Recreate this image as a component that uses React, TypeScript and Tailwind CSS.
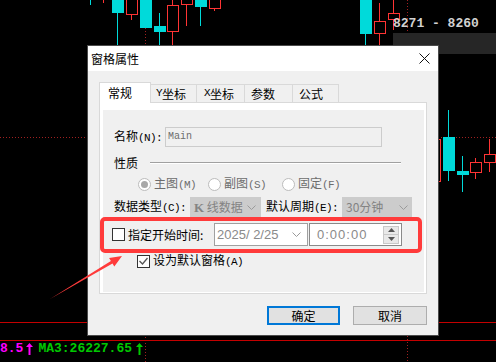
import React from "react";

type Candle = { x: number; top: number; bot: number; wt: number; wb: number; up: boolean };

const CYAN = "#00dada";
const RED = "#ff3434";

const candles: Candle[] = [
  { x: 85, top: -10, bot: -1, wt: 0, wb: 5, up: false },
  { x: 98, top: -10, bot: -1, wt: 0, wb: 3, up: true },
  { x: 112, top: 0, bot: 13, wt: 0, wb: 45, up: false },
  { x: 126, top: -1, bot: 15, wt: 15, wb: 20, up: true },
  { x: 140, top: 0, bot: 28, wt: 0, wb: 28, up: false },
  { x: 154, top: 26, bot: 32, wt: 13, wb: 45, up: false },
  { x: 167, top: 5, bot: 32, wt: 0, wb: 45, up: true },
  { x: 181, top: -1, bot: 5, wt: 0, wb: 26, up: true },
  { x: 195, top: 0, bot: 7, wt: 0, wb: 26, up: false },
  { x: 209, top: -1, bot: 9, wt: 0, wb: 11, up: true },
  { x: 360, top: 0, bot: 34, wt: 0, wb: 45, up: false },
  { x: 374, top: 21, bot: 34, wt: 3, wb: 45, up: true },
  { x: 388, top: 13, bot: 20, wt: 0, wb: 30, up: true },
  { x: 429, top: 139, bot: 182, wt: 139, wb: 182, up: true },
  { x: 443, top: 137, bot: 171, wt: 110, wb: 181, up: false },
  { x: 457, top: 171, bot: 175, wt: 156, wb: 192, up: false },
  { x: 470, top: 162, bot: 173, wt: 158, wb: 179, up: true },
  { x: 484, top: 154, bot: 163, wt: 139, wb: 172, up: true },
];

function Chart() {
  return (
    <svg className="absolute left-0 top-0" width="496" height="362">
      <line x1="0" y1="137.5" x2="496" y2="137.5" stroke="#a02020" strokeDasharray="1 2" />
      <line x1="145.5" y1="28" x2="145.5" y2="362" stroke="#a02020" strokeDasharray="1 2" />
      <line x1="407.5" y1="0" x2="407.5" y2="362" stroke="#a02020" strokeDasharray="1 2" />
      <line x1="0" y1="322.5" x2="496" y2="322.5" stroke="#c40000" />
      <line x1="0" y1="340.5" x2="496" y2="340.5" stroke="#c40000" />
      {candles.map((c, i) => (
        <g key={i}>
          <line x1={c.x + 5.5} y1={c.wt} x2={c.x + 5.5} y2={c.wb} stroke={c.up ? RED : CYAN} />
          {c.up ? (
            <rect x={c.x + 0.5} y={c.top + 0.5} width="11" height={c.bot - c.top - 1} fill="#000" stroke={RED} />
          ) : (
            <rect x={c.x} y={c.top} width="12" height={c.bot - c.top} fill={CYAN} />
          )}
        </g>
      ))}
    </svg>
  );
}

function UpArrow({ color }: { color: string }) {
  return (
    <svg width="7" height="12" viewBox="0 0 7 12">
      <path d="M3.5 0L7 4H4.5V12H2.5V4H0Z" fill={color} />
    </svg>
  );
}

function Chevron({ color }: { color: string }) {
  return (
    <svg width="9" height="5" viewBox="0 0 9 5">
      <path d="M0.5 0.5L4.5 4.5L8.5 0.5" fill="none" stroke={color} />
    </svg>
  );
}

// half-width latin part, like the bitmap UI font
function H({ children }: { children: React.ReactNode }) {
  return <span className="font-['Liberation_Mono',monospace] text-[11px] tracking-[-0.6px]">{children}</span>;
}

function Radio({ checked, label, hot, w }: { checked?: boolean; label: string; hot: string; w: string }) {
  return (
    <div className={`flex items-center ${w}`}>
      <div className="flex h-[13px] w-[13px] items-center justify-center rounded-full border border-[#bcbcbc] bg-white">
        {checked && <div className="h-[7px] w-[7px] rounded-full bg-[#a8a8a8]" />}
      </div>
      <span className="ml-[3px] text-[#6d6d6d]">
        {label}
        <H>({hot})</H>
      </span>
    </div>
  );
}

export default function App() {
  return (
    <div className="relative h-[362px] w-[496px] overflow-hidden bg-black font-['Noto_Sans_CJK_SC','Noto_Sans',sans-serif]">
      <Chart />

      <div className="absolute left-[393px] top-[17px] font-['Liberation_Mono',monospace] text-[13px] font-bold leading-[14px] text-[#d2d2d2]">
        8271 - 8260
      </div>
      <div className="absolute left-[393px] top-[33px] h-[21px] w-[103px] bg-[#262626]" />

      <div className="absolute left-0 top-[342px] flex items-center font-['Liberation_Mono',monospace] text-[13px] font-bold leading-[14px]">
        <span className="text-[#ff00ff]">8.5</span>
        <span className="ml-[3px] mr-[5px]"><UpArrow color="#ff00ff" /></span>
        <span className="text-[#00c800]">MA3:26227.65</span>
        <span className="ml-[4px]"><UpArrow color="#00c800" /></span>
      </div>

      {/* dialog window */}
      <div className="absolute left-[87px] top-[45px] flex h-[291px] w-[352px] flex-col border border-[#4a4a4a] bg-[#f0f0f0] text-[12px] leading-none text-black">
        <div className="flex h-[25px] items-center justify-between bg-white pl-[3px] pr-[8px]">
          <span>窗格属性</span>
          <svg width="11" height="11" viewBox="0 0 11 11">
            <path d="M0.5 0.5L10.5 10.5M10.5 0.5L0.5 10.5" stroke="#111" />
          </svg>
        </div>

        <div className="flex flex-col px-[11px] pt-[11px]">
          <div className="flex h-[20px] items-end">
            <div className="relative z-10 -mb-px flex h-[21px] w-[52px] items-center border border-b-0 border-[#d9d9d9] bg-white pl-[8px]">
              常规
            </div>
            <div className="flex h-[18px] w-[46px] items-center border-r border-t border-[#d9d9d9] pl-[5px]"><H>Y</H>坐标</div>
            <div className="flex h-[18px] w-[48px] items-center border-r border-t border-[#d9d9d9] pl-[7px]"><H>X</H>坐标</div>
            <div className="flex h-[18px] w-[48px] items-center border-r border-t border-[#d9d9d9] pl-[6px]">参数</div>
            <div className="flex h-[18px] w-[46px] items-center border-r border-t border-[#d9d9d9] pl-[6px]">公式</div>
          </div>

          <div className="flex h-[192px] flex-col border border-[#d9d9d9] bg-white pb-px pl-[3px] pr-[2px] pt-[7px]">
            <div className="flex flex-1 flex-col bg-[#f0f0f0]">
              <div className="mt-[17px] flex h-[20px] items-center pl-[11px]">
                <span className="w-[51px]">名称<H>(N):</H></span>
                <div className="flex h-[20px] w-[217px] items-center border border-[#cccccc] bg-[#f0f0f0] pl-[2px] font-['Liberation_Mono',monospace] text-[10px] text-[#6d6d6d]">
                  Main
                </div>
              </div>

              <div className="mt-[7px] flex h-[18px] items-center pl-[11px]">
                <span className="w-[36px]">性质</span>
                <div className="h-[2px] w-[251px] border-b border-t border-b-white border-t-[#a0a0a0]" />
              </div>

              <div className="mt-[3px] flex h-[18px] items-center pl-[35px]">
                <Radio checked label="主图" hot="M" w="w-[70px]" />
                <Radio label="副图" hot="S" w="w-[74px]" />
                <Radio label="固定" hot="F" w="w-[60px]" />
              </div>

              <div className="mt-[4px] flex h-[20px] items-center pl-[11px]">
                <span className="w-[76px]">数据类型<H>(C):</H></span>
                <div className="flex h-[20px] w-[71px] items-center justify-between bg-[#cccccc] pl-[4px] pr-[5px] text-[#838383]">
                  <span><b className="font-['Liberation_Serif',serif] text-[13px]">K</b> 线数据</span>
                  <Chevron color="#9a9a9a" />
                </div>
                <span className="ml-[5px] w-[76px]">默认周期<H>(E):</H></span>
                <div className="flex h-[20px] w-[70px] items-center justify-between bg-[#cccccc] pl-[4px] pr-[4px] text-[#838383]">
                  <span>30分钟</span>
                  <Chevron color="#9a9a9a" />
                </div>
              </div>

              <div className="mt-[6px] flex h-[23px] items-center pl-[9px]">
                <div className="h-[13px] w-[13px] border border-[#333] bg-white" />
                <span className="ml-[3px] w-[86px]">指定开始时间:</span>
                <div className="flex h-[23px] w-[94px] items-center justify-between border border-[#a0a0a0] bg-white pl-[2px] pr-[6px] font-['Liberation_Sans',sans-serif] text-[13px] text-[#8a8a8a]">
                  <span>2025/ 2/25</span>
                  <Chevron color="#9a9a9a" />
                </div>
                <div className="ml-px flex h-[23px] w-[93px] items-center justify-between border border-[#8a8a8a] bg-white pl-[7px] pr-[2px] font-['Liberation_Sans',sans-serif] text-[13px] tracking-[1px] text-[#8a8a8a]">
                  <span>0:00:00</span>
                  <div className="flex flex-col">
                    <div className="flex h-[9px] w-[16px] items-center justify-center border border-[#c8c8c8] bg-[#e8e8e8]">
                      <svg width="7" height="4" viewBox="0 0 7 4"><path d="M3.5 0L7 4H0Z" fill="#555" /></svg>
                    </div>
                    <div className="flex h-[9px] w-[16px] items-center justify-center border border-t-0 border-[#c8c8c8] bg-[#e8e8e8]">
                      <svg width="7" height="4" viewBox="0 0 7 4"><path d="M0 0H7L3.5 4Z" fill="#555" /></svg>
                    </div>
                  </div>
                </div>
              </div>

              <div className="mt-[7px] flex h-[16px] items-center pl-[34px]">
                <div className="flex h-[13px] w-[13px] items-center justify-center border border-[#333] bg-white">
                  <svg width="9" height="8" viewBox="0 0 9 8">
                    <path d="M0.5 4L3.5 7L8.5 1" fill="none" stroke="#555" strokeWidth="1.3" />
                  </svg>
                </div>
                <span className="ml-[3px]">设为默认窗格<H>(A)</H></span>
              </div>
            </div>
          </div>

          <div className="mt-[12px] flex justify-end gap-[13px]">
            <button className="flex h-[19px] w-[73px] items-center justify-center border-2 border-[#0078d7] bg-[#e1e1e1]">
              确定
            </button>
            <button className="flex h-[19px] w-[74px] items-center justify-center border border-[#adadad] bg-[#e1e1e1]">
              取消
            </button>
          </div>
        </div>
      </div>

      {/* annotation */}
      <div className="absolute left-[100px] top-[217px] h-[36px] w-[322px] rounded-[5px] border-4 border-[#ff3b3b]" />
      <svg className="pointer-events-none absolute left-0 top-0" width="496" height="362">
        <polygon points="50,299 110.9,260.9 109.1,257.9 122,256 114.3,266.5 112.5,263.5" fill="#ff3b3b" />
      </svg>
    </div>
  );
}
